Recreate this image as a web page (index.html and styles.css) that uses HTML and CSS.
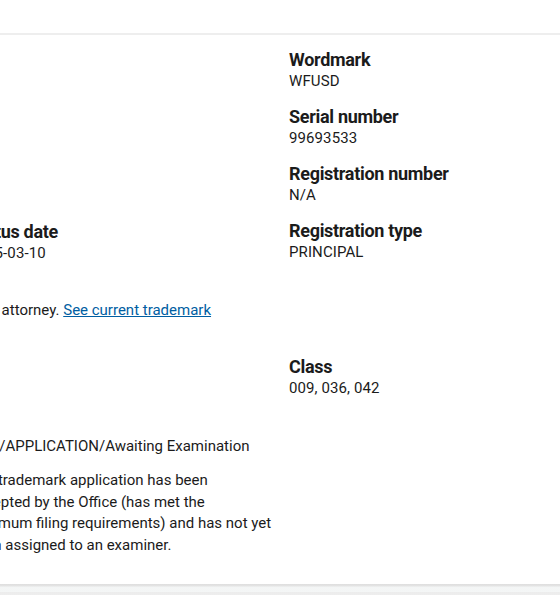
FILE: index.html
```html
<!DOCTYPE html>
<html lang="en">
<head>
<meta charset="utf-8">
<title>Trademark status</title>
<link rel="stylesheet" href="styles.css">
</head>
<body>
<div class="topbar"></div>
<section class="card">
  <div class="col col-left">
    <div class="field">
      <h3 class="label">Status date</h3>
      <p class="value">2025-03-10</p>
    </div>
    <p class="note">your attorney. <a href="#" class="link">See current trademark</a></p>
    <p class="status">LIVE/APPLICATION/Awaiting Examination</p>
    <p class="desc">The trademark application has been<br>accepted by the Office (has met the<br>minimum filing requirements) and has not yet<br>been assigned to an examiner.</p>
  </div>
  <div class="col col-right">
    <div class="field">
      <h3 class="label">Wordmark</h3>
      <p class="value">WFUSD</p>
    </div>
    <div class="field">
      <h3 class="label">Serial number</h3>
      <p class="value">99693533</p>
    </div>
    <div class="field">
      <h3 class="label">Registration number</h3>
      <p class="value">N/A</p>
    </div>
    <div class="field">
      <h3 class="label">Registration type</h3>
      <p class="value">PRINCIPAL</p>
    </div>
    <div class="field field-empty"></div>
    <div class="field">
      <h3 class="label">Class</h3>
      <p class="value">009, 036, 042</p>
    </div>
  </div>
</section>
<div class="band"></div>
</body>
</html>
```
FILE: styles.css
```css
html, body {
  margin: 0;
  padding: 0;
  background: #ffffff;
  overflow: hidden;
}
body {
  font-family: Roboto, "Noto Sans", "Liberation Sans", sans-serif;
  color: #1b1b1b;
}
.topbar {
  height: 33px;
  border-bottom: 2px solid #eeeeee;
}
.card {
  display: grid;
  grid-template-columns: 320px 1fr;
  margin-left: -31px;
  height: 549px;
  align-items: start;
}
.col-right {
  padding-top: 14px;
}
.col-left {
  padding-top: 186px;
}
.field {
  margin-bottom: 15px;
}
.field-empty {
  height: 64px;
}
.label {
  margin: 0;
  font-size: 18px;
  line-height: 22px;
  font-weight: 700;
  letter-spacing: -0.3px;
}
.value {
  margin: 0;
  font-size: 15px;
  line-height: 20px;
  letter-spacing: 0.1px;
}
.note {
  margin: 36px 0 0;
  font-size: 15px;
  line-height: 22px;
}
.link {
  color: #005ea2;
  text-decoration: underline;
}
.status {
  margin: 114px 0 0;
  font-size: 15px;
  line-height: 22px;
}
.desc {
  margin: 13px 0 0;
  font-size: 15px;
  line-height: 21.7px;
}
.band {
  height: 11px;
  background: linear-gradient(#dedede 0, #e4e4e4 2px, #f3f5f5 3px, #f4f6f6 8px, #ececec 8px, #eeeeee 11px);
}
```
